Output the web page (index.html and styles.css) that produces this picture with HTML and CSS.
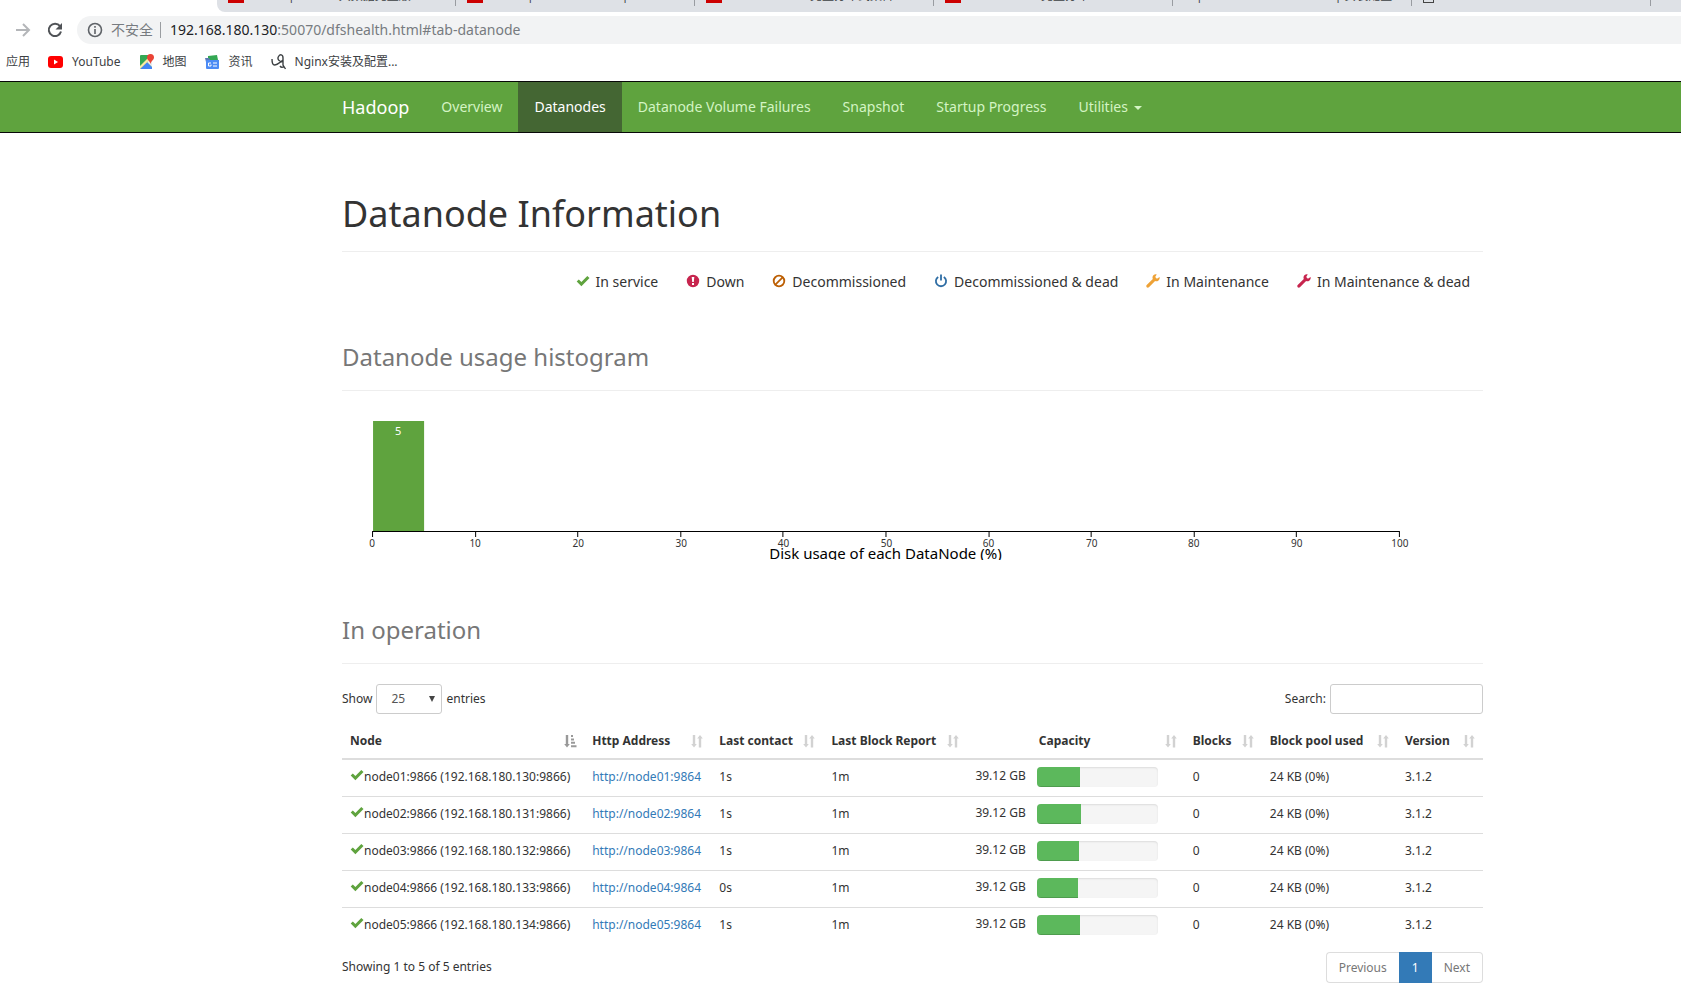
FILE: index.html
```html
<!DOCTYPE html>
<html lang="en">
<head>
<meta charset="utf-8">
<title>Namenode information</title>
<link rel="stylesheet" href="styles.css">
</head>
<body>
<svg class="sprite" aria-hidden="true">
  <symbol id="ok" viewBox="0 0 14 14"><path d="M.7 7.6 2.8 5.4 5.4 7.9 11.3 2 13.5 4.1 5.4 12.2Z"/></symbol>
  <symbol id="down" viewBox="0 0 14 14"><path fill-rule="evenodd" d="M7 .8a6.2 6.2 0 1 1 0 12.4A6.2 6.2 0 0 1 7 .8ZM5.7 3l.5 5h1.6l.5-5ZM6 9v2h2V9Z"/></symbol>
  <symbol id="ban" viewBox="0 0 14 14"><g fill="none" stroke="currentColor" stroke-width="1.8"><circle cx="7" cy="7" r="5.3"/><path d="M3.4 10.6l7.2-7.2"/></g></symbol>
  <symbol id="power" viewBox="0 0 14 14"><g fill="none" stroke="currentColor" stroke-width="1.8"><path d="M4.2 2.9a5.1 5.1 0 1 0 5.6 0M7 .6v6"/></g></symbol>
  <symbol id="wrench" viewBox="0 0 14 14"><path d="M13.6 3 10.900 4.800 9.200 3.100 10.700.4C8.800-.2 7 .9 6.600 2.700c-.2.800-.1 1.600.2 2.300L.7 11c-.6.600-.6 1.600 0 2.200s1.600.6 2.200 0l6.200-6.100c.7.300 1.500.3 2.200.1 1.700-.5 2.700-2.300 2.300-4.200Z"/></symbol>
  <symbol id="sort" viewBox="0 0 14 14"><path d="M2.800 1h2.400v9h1.600L4 13.600 1.200 10h1.600ZM8.800 13.400V4.600H7.200L10 1l2.800 3.600h-1.600v8.800Z"/></symbol>
  <symbol id="sorted" viewBox="0 0 14 14"><path d="M2.800 1h2.400v9h1.600L4 13.600 1.200 10h1.600ZM8 1h2v2H8ZM8 4.400h3v2H8ZM8 7.800h4v2H8ZM8 11.200h5.500v2H8Z"/></symbol>
</svg>

<header class="browser">
  <div class="tabs">
    <div class="tab"><i class="fav"></i><span>|</span><span>大数据完整版</span></div>
    <div class="tab"><i class="fav"></i><span>|</span><span class="far">|</span></div>
    <div class="tab"><i class="fav"></i><span class="far">完整分布式集群</span></div>
    <div class="tab"><i class="fav"></i><span class="mid">完整分布</span></div>
    <div class="tab"><span class="bar-mark">|</span><span class="end">| 安装配置</span></div>
    <div class="tab"><i class="page-icon"></i></div>
  </div>
  <div class="toolbar">
    <button class="tool" aria-label="Forward"><svg viewBox="0 0 16 16" width="16" height="16" fill="none" stroke="#b4b6b9" stroke-width="2"><path d="M1 8h13M8 2l6 6-6 6"/></svg></button>
    <button class="tool" aria-label="Reload"><svg viewBox="0 0 16 16" width="16" height="16"><path d="M13 4.200A6.200 6.200 0 1 0 14 9.500" fill="none" stroke="#505357" stroke-width="2"/><path d="M15 1v6.500H8.500Z" fill="#505357"/></svg></button>
    <div class="omnibox">
      <svg viewBox="0 0 16 16" width="16" height="16" fill="none" stroke="#5f6368" stroke-width="1.600"><circle cx="8" cy="8" r="6.500"/><path d="M8 7v5M8 4v1.800"/></svg>
      <span class="insecure">不安全</span>
      <span class="url"><b>192.168.180.130</b>:50070/dfshealth.html#tab-datanode</span>
    </div>
  </div>
  <nav class="bookmarks">
    <a href="#">应用</a>
    <a href="#"><svg viewBox="0 0 16 16" width="16" height="16"><rect x="0" y="2" width="15" height="12" rx="3" fill="#f00"/><path d="M6 5.500v5L10 8Z" fill="#fff"/></svg>YouTube</a>
    <a href="#"><svg viewBox="0 0 16 16" width="16" height="16"><rect x="1" y="1" width="12" height="14" rx="1" fill="#34a853"/><path d="M1 15 8 8l5 5v2Z" fill="#4285f4"/><path d="M8 8l3-3 2 1v7Z" fill="#e8eaed"/><path d="M1 15v-3L9 4l2 1.500Z" fill="#fbe9a5"/><path d="M11.500 0a3.500 3.500 0 0 1 3.500 3.500C15 6 12 7 11.500 10 11 7 8 6 8 3.500A3.500 3.500 0 0 1 11.500 0Z" fill="#ea4335"/></svg>地图</a>
    <a href="#"><svg viewBox="0 0 16 16" width="16" height="16"><path d="M3 2l9-1 1 5H3Z" fill="#34a853"/><path d="M0 4h4l1 2h9v2H1Z" fill="#5e79b5"/><rect x="1" y="6" width="13" height="9" rx="1" fill="#4c8bf5"/><path d="M6 9H3.500v3H6v-1.500M8 9h4M8 12h4" fill="none" stroke="#fff"/></svg>资讯</a>
    <a href="#"><svg viewBox="0 0 16 16" width="16" height="16" fill="none" stroke="#3c4043" stroke-width="1.400"><path d="M1 5c0 2 0 6 2.500 6S8 9 12 6M12 8C8 8 6 5 7.500 2.500S12 0 12 4v7l2.500 4M9 12c1 1.500 2.500 1.500 4 .5"/></svg>Nginx安装及配置...</a>
  </nav>
</header>

<nav class="navbar">
  <a class="brand" href="#">Hadoop</a>
  <a href="#">Overview</a>
  <a class="active" href="#">Datanodes</a>
  <a href="#">Datanode Volume Failures</a>
  <a href="#">Snapshot</a>
  <a href="#">Startup Progress</a>
  <a href="#">Utilities <i class="caret"></i></a>
</nav>

<main class="page">
  <h1>Datanode Information</h1>
  <ul class="legend">
    <li><svg class="icon green"><use href="#ok"/></svg>In service</li>
    <li><svg class="icon crimson"><use href="#down"/></svg>Down</li>
    <li><svg class="icon brown"><use href="#ban"/></svg>Decommissioned</li>
    <li><svg class="icon blue"><use href="#power"/></svg>Decommissioned &amp; dead</li>
    <li><svg class="icon orange"><use href="#wrench"/></svg>In Maintenance</li>
    <li><svg class="icon crimson"><use href="#wrench"/></svg>In Maintenance &amp; dead</li>
  </ul>

  <h2>Datanode usage histogram</h2>
  <svg class="chart" viewBox="0 0 1140 150" role="img" aria-label="Disk usage of each DataNode">
    <rect class="bar" x="31" y="11" width="51" height="110"/>
    <text class="count" x="56" y="25">5</text>
    <path class="axis" d="M30.500 127V121.500H1056.500V127M133.500 121v6M235.500 121v6M338.500 121v6M440.500 121v6M543.500 121v6M646.500 121v6M748.500 121v6M851.500 121v6M953.500 121v6"/>
    <g class="ticks">
      <text x="30" y="137">0</text><text x="133" y="137">10</text><text x="236" y="137">20</text><text x="339" y="137">30</text><text x="441" y="137">40</text><text x="544" y="137">50</text><text x="646" y="137">60</text><text x="749" y="137">70</text><text x="851" y="137">80</text><text x="954" y="137">90</text><text x="1057" y="137">100</text>
    </g>
    <text class="axis-title" x="543" y="149">Disk usage of each DataNode (%)</text>
  </svg>

  <h2>In operation</h2>
  <div class="controls">
    <label>Show <span class="select"><select><option>25</option></select></span> entries</label>
    <label>Search: <input type="search"></label>
  </div>
  <table class="nodes">
    <colgroup><col class="c-node"><col class="c-http"><col class="c-contact"><col class="c-report"><col class="c-capacity"><col class="c-blocks"><col class="c-pool"><col class="c-version"></colgroup>
    <thead><tr>
      <th>Node<svg class="sort on"><use href="#sorted"/></svg></th>
      <th>Http Address<svg class="sort"><use href="#sort"/></svg></th>
      <th>Last contact<svg class="sort"><use href="#sort"/></svg></th>
      <th>Last Block Report<svg class="sort"><use href="#sort"/></svg></th>
      <th class="center">Capacity<svg class="sort"><use href="#sort"/></svg></th>
      <th>Blocks<svg class="sort"><use href="#sort"/></svg></th>
      <th>Block pool used<svg class="sort"><use href="#sort"/></svg></th>
      <th>Version<svg class="sort"><use href="#sort"/></svg></th>
    </tr></thead>
    <tbody>
      <tr><td><svg class="icon green"><use href="#ok"/></svg>node01:9866 (192.168.180.130:9866)</td><td><a href="#">http://node01:9864</a></td><td>1s</td><td>1m</td><td><div class="capacity">39.12 GB<div class="progress"><div class="fill" style="width:35.5%"></div></div></div></td><td>0</td><td>24 KB (0%)</td><td>3.1.2</td></tr>
      <tr><td><svg class="icon green"><use href="#ok"/></svg>node02:9866 (192.168.180.131:9866)</td><td><a href="#">http://node02:9864</a></td><td>1s</td><td>1m</td><td><div class="capacity">39.12 GB<div class="progress"><div class="fill" style="width:36.5%"></div></div></div></td><td>0</td><td>24 KB (0%)</td><td>3.1.2</td></tr>
      <tr><td><svg class="icon green"><use href="#ok"/></svg>node03:9866 (192.168.180.132:9866)</td><td><a href="#">http://node03:9864</a></td><td>1s</td><td>1m</td><td><div class="capacity">39.12 GB<div class="progress"><div class="fill" style="width:35%"></div></div></div></td><td>0</td><td>24 KB (0%)</td><td>3.1.2</td></tr>
      <tr><td><svg class="icon green"><use href="#ok"/></svg>node04:9866 (192.168.180.133:9866)</td><td><a href="#">http://node04:9864</a></td><td>0s</td><td>1m</td><td><div class="capacity">39.12 GB<div class="progress"><div class="fill" style="width:34%"></div></div></div></td><td>0</td><td>24 KB (0%)</td><td>3.1.2</td></tr>
      <tr><td><svg class="icon green"><use href="#ok"/></svg>node05:9866 (192.168.180.134:9866)</td><td><a href="#">http://node05:9864</a></td><td>1s</td><td>1m</td><td><div class="capacity">39.12 GB<div class="progress"><div class="fill" style="width:35.5%"></div></div></div></td><td>0</td><td>24 KB (0%)</td><td>3.1.2</td></tr>
    </tbody>
  </table>
  <div class="footer">
    <span>Showing 1 to 5 of 5 entries</span>
    <div class="pager"><button>Previous</button><button class="current">1</button><button>Next</button></div>
  </div>
</main>
</body>
</html>
```
FILE: styles.css
```css
* { box-sizing: border-box; }
body { margin: 0; background: #fff; color: #333; font: 13px/20px "Noto Sans", "Noto Sans CJK SC", sans-serif; }
a { text-decoration: none; color: #337ab7; }
button { font: inherit; cursor: pointer; }
.sprite { display: none; }

.browser { height: 81px; font-size: 13px; }
.tabs { display: flex; height: 12px; margin-left: 217px; background: #dee1e6; border-bottom-left-radius: 8px; overflow: hidden; }
.tab { flex: 0 0 239px; height: 6px; padding-left: 11px; border-right: 1px solid #999ca1; display: flex; align-items: flex-start; overflow: hidden; white-space: nowrap; }
.tab span { margin-top: -12px; margin-left: 44px; font-size: 12px; line-height: 16px; color: #3c4043; }
.tab .far { margin-left: 88px; }
.tab .mid { margin-left: 80px; }
.tab .bar-mark { margin-left: 12px; }
.tab .end { margin-left: 132px; }
.fav { flex: none; width: 16px; height: 3px; background: #c00; }
.page-icon { width: 11px; height: 3px; border: 1px solid #444; border-top: 0; }
.toolbar { display: flex; align-items: center; margin-top: 4px; padding-left: 15px; height: 28px; gap: 16px; }
.tool { padding: 0; border: 0; background: none; width: 16px; height: 16px; }
.omnibox { flex: 1; height: 28px; margin-left: -2px; padding-left: 10px; display: flex; align-items: center; background: #f2f3f4; border-radius: 14px 0 0 14px; font-size: 14px; color: #777b80; }
.insecure { margin-left: 8px; padding-right: 7px; border-right: 1px solid #9a9da1; line-height: 16px; }
.url { margin-left: 9px; }
.url b { font-weight: 400; color: #202124; }
.bookmarks { display: flex; gap: 18px; padding: 8px 6px; }
.bookmarks a { display: flex; align-items: center; gap: 8px; color: #3c4043; font-size: 12px; }

.navbar { display: flex; height: 52px; padding-left: 326px; background: #5fa33e; border-top: 1px solid #080808; border-bottom: 1px solid #080808; font-size: 14px; }
.navbar a { padding: 15px 16px; color: #d4f4c4; }
.navbar .brand { font-size: 18px; color: #fff; }
.navbar .active { background: #446633; color: #fff; }
.caret { display: inline-block; margin-left: 2px; vertical-align: middle; border: 4px solid transparent; border-top-color: currentColor; border-bottom: 0; }

.page { padding: 61px 198px 0 342px; }
h1, h2 { margin: 0; font-weight: 400; border-bottom: 1px solid #eee; }
h1 { font-size: 36px; line-height: 40px; padding-bottom: 17px; }
h2 { font-size: 24px; line-height: 28px; color: #777; padding-bottom: 19px; }
.legend { display: flex; justify-content: flex-end; gap: 28px; margin: 20px 13px 51px 0; padding: 0; list-style: none; font-size: 14px; }
.legend .icon { margin-right: 6px; }
.icon { width: 14px; height: 14px; vertical-align: -1px; fill: currentColor; }
.green { color: #5fa33e; }
.crimson { color: #c7254e; }
.brown { color: #bc5f04; }
.blue { color: #2e6da4; }
.orange { color: #eea236; }

.chart { display: block; width: 100%; margin: 19px 0 56px; overflow: hidden; }
.bar { fill: #5fa33e; }
.count { fill: #fff; font-size: 11px; text-anchor: middle; }
.axis { fill: none; stroke: #000; }
.ticks { font-size: 10px; text-anchor: middle; fill: #333; }
.axis-title { font-size: 15px; text-anchor: middle; fill: #000; }

.controls { display: flex; justify-content: space-between; margin-top: 20px; font-size: 12px; }
.controls label { display: flex; align-items: center; gap: 4px; }
select, input { height: 30px; border: 1px solid #ccc; border-radius: 3px; background: #fff; color: #555; font: inherit; }
.select { position: relative; }
.select::after { content: ""; position: absolute; right: 7px; top: 12px; border: 3px solid transparent; border-top: 6px solid #444; border-bottom: 0; pointer-events: none; }
select { width: 66px; padding: 0 14px; appearance: none; }
input { width: 153px; padding: 5px 10px; }

.nodes { width: 100%; margin-top: 10px; table-layout: fixed; border-collapse: collapse; font-size: 12px; white-space: nowrap; }
.c-node { width: 242px; } .c-http { width: 127px; } .c-contact { width: 112px; } .c-report { width: 143px; }
.c-capacity { width: 218px; } .c-blocks { width: 77px; } .c-pool { width: 135px; } .c-version { width: 86px; }
.nodes th { position: relative; height: 35px; padding: 0 30px 0 8px; text-align: left; border-bottom: 2px solid #ddd; }
.nodes th.center { text-align: center; }
.sort { position: absolute; right: 7px; top: 10px; width: 14px; height: 14px; fill: #d2d2d2; }
.sort.on { fill: #999; }
.nodes td { height: 37px; padding: 0 8px 2px; border-top: 1px solid #ddd; }
.capacity { display: flex; align-items: flex-start; justify-content: flex-end; gap: 11px; padding-right: 19px; }
.progress { width: 121px; height: 20px; margin-top: 1px; border-radius: 4px; overflow: hidden; background: #f5f5f5; box-shadow: inset 0 1px 2px rgba(0,0,0,.1); }
.fill { height: 100%; background: #5cb85c; box-shadow: inset 0 -1px 0 rgba(0,0,0,.15); }

.footer { display: flex; justify-content: space-between; padding-top: 8px; font-size: 12px; line-height: 29px; }
.pager { display: flex; }
.pager button { height: 31px; padding: 0 12px; border: 1px solid #ddd; background: #fff; color: #777; }
.pager button:first-child { border-radius: 4px 0 0 4px; border-right: 0; }
.pager button:last-child { border-radius: 0 4px 4px 0; border-left: 0; }
.pager .current { background: #337ab7; border-color: #337ab7; color: #fff; }
```
